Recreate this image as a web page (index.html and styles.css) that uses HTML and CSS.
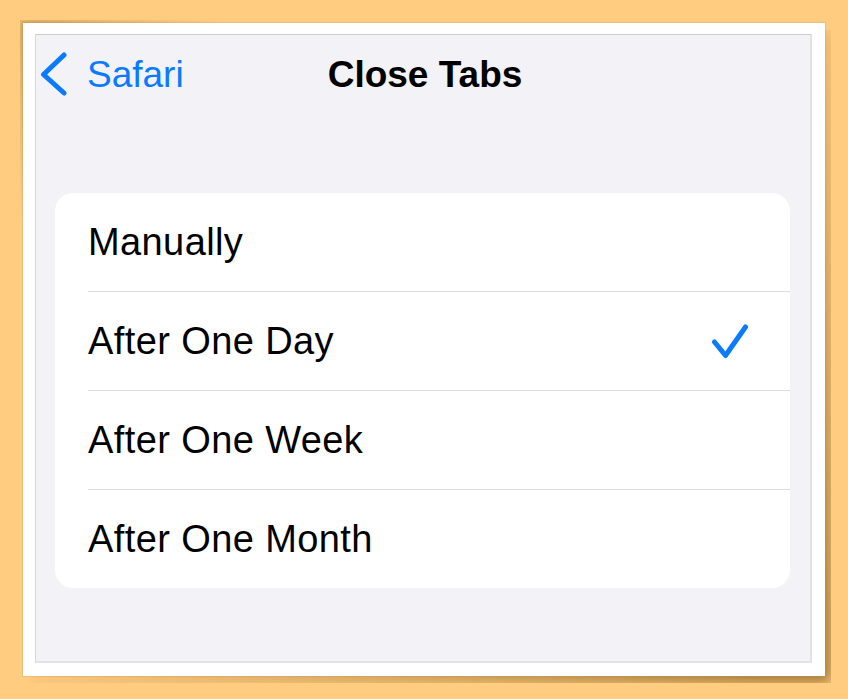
FILE: index.html
```html
<!DOCTYPE html>
<html lang="en">
  <head>
    <meta charset="UTF-8" />
    <meta name="viewport" content="width=device-width, initial-scale=1.0" />
    <title>Close Tabs</title>
    <link rel="stylesheet" href="styles.css">
  </head>
  <body>
    <div class="paper">
      <div class="screen">
        <div class="nav">
          <a class="back" href="#">
            <svg class="chevron" width="28" height="44" viewBox="0 0 28 44">
              <path d="M24 3 L3.5 22.5 L24 41" fill="none" stroke="#0a7aff" stroke-width="5" stroke-linecap="round" stroke-linejoin="round" />
            </svg>
            <span>Safari</span>
          </a>
          <div class="title">Close Tabs</div>
          <div></div>
        </div>

        <ul class="list">
          <li class="row"><div class="row-inner">Manually</div></li>
          <li class="row">
            <div class="row-inner">
              After One Day
              <svg class="check" width="38" height="36" viewBox="0 0 38 36">
                <path d="M3.5 19 L14.5 32.5 L34.5 4" fill="none" stroke="#0a7aff" stroke-width="5" stroke-linecap="round" stroke-linejoin="round" />
              </svg>
            </div>
          </li>
          <li class="row"><div class="row-inner">After One Week</div></li>
          <li class="row"><div class="row-inner">After One Month</div></li>
        </ul>
      </div>
    </div>
  </body>
</html>
```

FILE: styles.css
```css
* {
  box-sizing: border-box;
}
body {
  margin: 0;
  height: 699px;
  background: #ffcc80;
  font-family: "Liberation Sans", Arial, sans-serif;
  overflow: hidden;
}
.paper {
  position: relative;
  margin: 23px 0 0 23px;
  width: 802px;
  height: 653px;
  padding: 11px 13px 13px 12px;
  background: #fff;
  box-shadow: 0 0 0 1px rgba(180, 150, 100, 0.25);
}
/* curled-paper shadows: top-left and bottom-right */
.paper::before,
.paper::after {
  content: "";
  position: absolute;
  inset: 0;
  z-index: -1;
}
.paper::before {
  transform: translate(-3px, -3px);
  background: rgba(110, 70, 0, 0.45);
  filter: blur(5px);
  -webkit-mask-image: linear-gradient(135deg, #000 0%, transparent 14%);
  mask-image: linear-gradient(135deg, #000 0%, transparent 14%);
}
.paper::after {
  transform: translate(6px, 7px);
  background: rgba(100, 65, 0, 0.6);
  filter: blur(7px);
  -webkit-mask-image: linear-gradient(135deg, transparent 40%, #000 95%);
  mask-image: linear-gradient(135deg, transparent 40%, #000 95%);
}
.screen {
  height: 100%;
  background: #f2f2f7;
  border: 1px solid #d8d8da;
  border-top-color: #cbcbcd;
  border-right: 2px solid #e2e2e4;
  border-bottom: 2px solid #e2e2e4;
}
.nav {
  height: 78px;
  display: grid;
  grid-template-columns: 1fr auto 1fr;
  align-items: center;
  padding-left: 4px;
}
.back {
  display: flex;
  align-items: center;
  gap: 19px;
  color: #0a7aff;
  text-decoration: none;
  font-size: 37px;
  line-height: 1;
}
.chevron {
  display: block;
}
.title {
  font-size: 37px;
  font-weight: 700;
  color: #000;
  line-height: 1;
}
.list {
  list-style: none;
  margin: 80px 20px 0 19px;
  padding: 0;
  background: #fff;
  border-radius: 18px;
  overflow: hidden;
}
.row {
  padding-left: 33px;
}
.row-inner {
  height: 99px;
  display: flex;
  align-items: center;
  justify-content: space-between;
  padding-right: 41px;
  font-size: 38px;
  letter-spacing: 0.4px;
  line-height: 1;
  color: #000;
  border-bottom: 1px solid #dcdcde;
}
.row:last-child .row-inner {
  border-bottom: none;
  height: 98px;
}
.check {
  display: block;
}
```
